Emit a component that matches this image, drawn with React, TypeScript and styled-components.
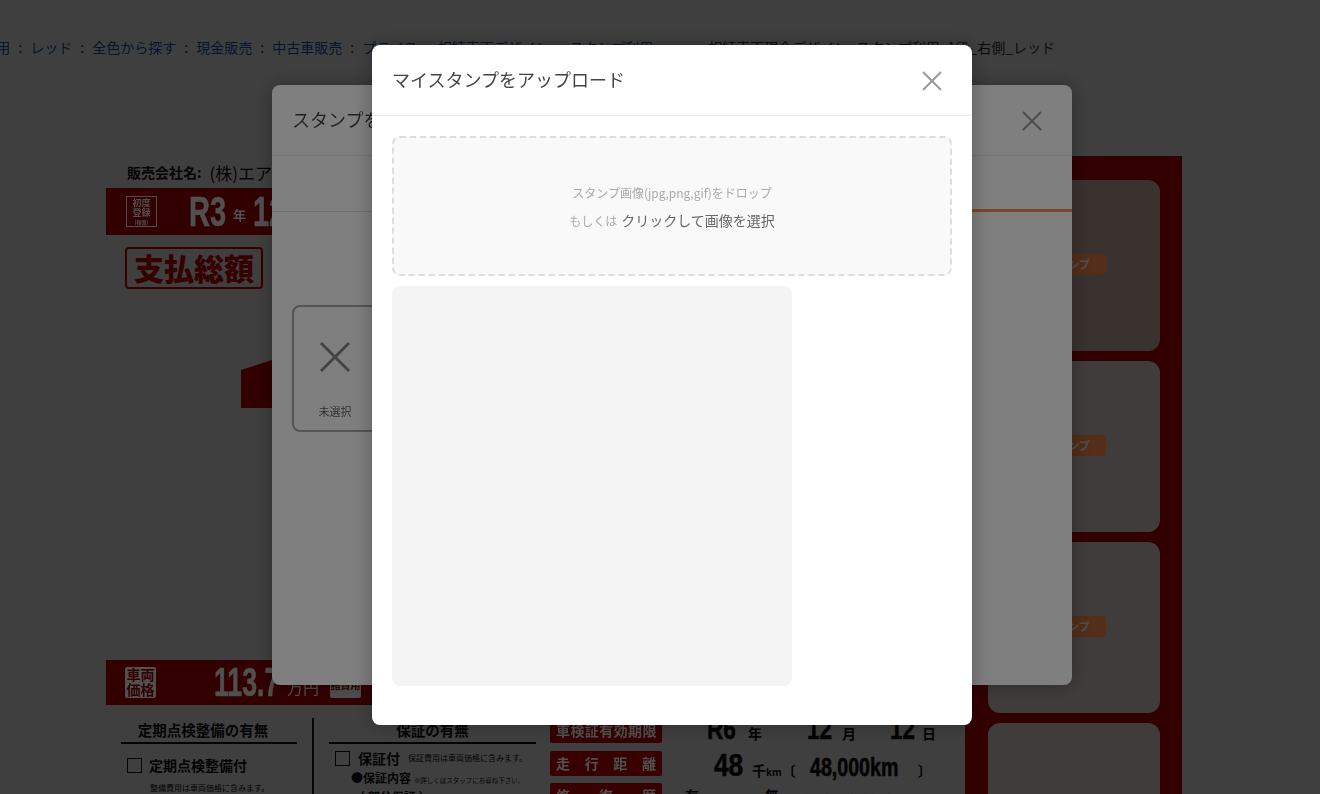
import React from "react";
import styled, { createGlobalStyle, css } from "styled-components";

const GlobalStyle = createGlobalStyle`
  html, body {
    margin: 0;
    padding: 0;
    background: #fff;
    overflow: hidden;
    height: 100%;
    font-family: "Noto Sans CJK JP", "Noto Sans", sans-serif;
  }
`;

// flyer parts that stay in front of the first dim layer
const raised = css`
  position: relative;
  z-index: 2;
`;

const Page = styled.div`
  width: 1320px;
  height: 794px;
  overflow: hidden;
`;

const Breadcrumb = styled.nav`
  height: 156px;
  box-sizing: border-box;
  padding: 37px 265px 0 0;
  display: flex;
  justify-content: flex-end;
  font-size: 14px;
  line-height: 20px;
  white-space: nowrap;
  color: #333;
`;

const Crumb = styled.a`
  color: #1a55b8;
`;

const Sep = styled.span<{ $wide?: boolean }>`
  width: ${(p) => (p.$wide ? 55 : 20)}px;
  flex: none;
  text-align: center;
`;

const Flyer = styled.div`
  margin-left: 106px;
  width: 1076px;
  display: flex;
`;

const Sheet = styled.div`
  width: 859px;
  flex: none;
`;

const Seller = styled.div`
  height: 32px;
  padding-left: 21px;
  display: flex;
  align-items: center;
  gap: 8px;
  font-size: 14px;
  font-weight: 700;
  color: #111;
`;

const SellerName = styled.span`
  font-size: 17px;
  font-weight: 400;
`;

const RedBand = styled.div<{ $height: number }>`
  height: ${(p) => p.$height}px;
  background: #cc0000;
  display: flex;
  align-items: center;
  color: #a0a0a0;
`;

const RegistBox = styled.div`
  ${raised}
  margin-left: 20px;
  width: 31px;
  height: 31px;
  box-sizing: border-box;
  border: 1px solid #a0a0a0;
  font-size: 9px;
  line-height: 10px;
  font-weight: 700;
  text-align: center;
  display: flex;
  flex-direction: column;
  justify-content: center;
`;

const TinyLine = styled.span`
  font-size: 5px;
  line-height: 7px;
`;

const Condensed = styled.span<{ $size: number; $width: number; $scale: number; $left?: number }>`
  display: inline-block;
  flex: none;
  margin-left: ${(p) => p.$left ?? 0}px;
  width: ${(p) => p.$width}px;
  font-family: "Liberation Sans", sans-serif;
  font-size: ${(p) => p.$size}px;
  line-height: ${(p) => p.$size}px;
  font-weight: 700;
  white-space: nowrap;
  -webkit-text-stroke: 0.6px currentColor;
  transform: scaleX(${(p) => p.$scale});
  transform-origin: left center;
`;

const BandFigure = styled(Condensed)`
  ${raised}
`;

const BandUnit = styled.span`
  ${raised}
  margin: 6px 7px 0 7px;
  font-size: 13px;
  font-weight: 700;
`;

const TotalTag = styled.div`
  margin: 12px 0 0 19px;
  width: 138px;
  height: 42px;
  box-sizing: border-box;
  border: 2px solid #d80000;
  border-radius: 4px;
  color: #d80000;
  font-size: 30px;
  line-height: 37px;
  font-weight: 900;
  text-align: center;
`;

const PriceArea = styled.div`
  height: 371px;
  padding: 71px 0 0 135px;
  box-sizing: border-box;
`;

const PriceMark = styled.svg`
  display: block;
`;

const PriceTagBox = styled.div`
  ${raised}
  margin-left: 19px;
  width: 31px;
  height: 31px;
  border-radius: 2px;
  background: #a0a0a0;
  color: #660000;
  font-size: 14px;
  line-height: 15px;
  font-weight: 700;
  text-align: center;
`;

const PriceUnit = styled.span`
  ${raised}
  font-size: 16px;
  margin: 8px 0 0 8px;
`;

const FeeBox = styled.div`
  ${raised}
  margin-left: 11px;
  width: 31px;
  height: 31px;
  border-radius: 2px;
  background: #a0a0a0;
  color: #660000;
  font-size: 10px;
  font-weight: 700;
  display: flex;
  align-items: center;
  justify-content: center;
  padding-top: 4px;
  box-sizing: border-box;
`;

const Details = styled.div`
  display: flex;
  padding: 13px 0 0 15px;
  color: #111;
`;

const Column = styled.div<{ $width: number }>`
  width: ${(p) => p.$width}px;
  flex: none;
`;

const ColumnTitle = styled.div<{ $shift?: number }>`
  height: 24px;
  padding-right: ${(p) => p.$shift ?? 0}px;
  border-bottom: 2px solid #111;
  font-size: 14.5px;
  line-height: 24px;
  font-weight: 700;
  text-align: center;
`;

const Divider = styled.div`
  width: 2px;
  height: 90px;
  margin: 0 15px;
  background: #111;
`;

const CheckRow = styled.div<{ $top: number; $gap: number }>`
  display: flex;
  align-items: center;
  gap: ${(p) => p.$gap}px;
  padding: ${(p) => p.$top}px 0 0 6px;
  font-size: 14px;
  line-height: 16px;
  font-weight: 700;
  white-space: nowrap;
`;

const CheckBox = styled.span`
  width: 13px;
  height: 13px;
  border: 1px solid #111;
  flex: none;
`;

const SmallNote = styled.span<{ $size?: number; $left?: number }>`
  margin-left: ${(p) => p.$left ?? 0}px;
  font-size: ${(p) => p.$size ?? 8}px;
  font-weight: 400;
`;

const Indented = styled.div<{ $left: number; $top: number }>`
  padding: ${(p) => p.$top}px 0 0 ${(p) => p.$left}px;
  font-size: 12px;
  font-weight: 700;
  line-height: 15px;
  white-space: nowrap;
`;

const SpecColumn = styled.div`
  margin-left: 14px;
  width: 400px;
`;

const SpecRow = styled.div<{ $height: number }>`
  height: ${(p) => p.$height}px;
  display: flex;
  align-items: flex-start;
`;

const SpecLabel = styled.div<{ $spread?: boolean }>`
  width: 112px;
  height: 25px;
  flex: none;
  box-sizing: border-box;
  padding: 0 6px;
  border-radius: 2px;
  background: #e00000;
  color: #a0a0a0;
  font-size: 14px;
  line-height: 25px;
  font-weight: 700;
  text-align: justify;
  text-align-last: justify;
  letter-spacing: ${(p) => (p.$spread ? 0 : "-0.5px")};
`;

const SpecLabelText = styled.div`
  ${raised}
`;

const SpecValue = styled.div<{ $offset: number }>`
  display: flex;
  align-items: baseline;
  margin-top: ${(p) => p.$offset}px;
  color: #111;
  white-space: nowrap;
`;

const SpecUnit = styled.span<{ $left: number }>`
  margin-left: ${(p) => p.$left}px;
  font-size: 14px;
  font-weight: 700;
`;

const KmUnit = styled.span`
  font-size: 10px;
`;

const StampColumn = styled.div`
  flex: 1;
  height: 640px;
  box-sizing: border-box;
  padding: 24px 22px 0 23px;
  background: #cc0000;
  display: flex;
  flex-direction: column;
  gap: 10px;
`;

const StampCard = styled.div<{ $tinted?: boolean }>`
  height: 171px;
  flex: none;
  border-radius: 12px;
  background: ${(p) => (p.$tinted ? "#ebcabd" : "#fff3ee")};
  display: flex;
  align-items: center;
  justify-content: center;
`;

const StampBadge = styled.div`
  ${raised}
  width: 76px;
  height: 21px;
  margin: -2px 12px 0 0;
  border-radius: 3px;
  background: #a85c30;
  color: #a0a0a0;
  font-size: 11px;
  line-height: 21px;
  font-weight: 700;
  text-align: center;
`;

const Overlay = styled.div<{ $layer: number }>`
  position: fixed;
  inset: 0;
  z-index: ${(p) => p.$layer};
  background: rgba(0, 0, 0, 0.5);
`;

const Modal = styled.section<{ $width: number; $top: number; $height: number; $layer: number }>`
  position: fixed;
  z-index: ${(p) => p.$layer};
  left: calc(50% + 12px - ${(p) => p.$width / 2}px);
  top: ${(p) => p.$top}px;
  width: ${(p) => p.$width}px;
  height: ${(p) => p.$height}px;
  border-radius: 8px;
  background: #fff;
  overflow: hidden;
  box-shadow: 0 0 20px rgba(0, 0, 0, 0.3);
`;

const ModalHead = styled.header`
  height: 71px;
  box-sizing: border-box;
  padding: 0 30px 2px 20px;
  border-bottom: 1px solid #e8e8e8;
  display: flex;
  align-items: center;
  justify-content: space-between;
`;

const ModalTitle = styled.h2`
  margin: 0;
  font-size: 18px;
  font-weight: 400;
  color: #444;
`;

const CloseIcon = styled.svg`
  display: block;
  width: 20px;
  height: 20px;
  margin-top: 3px;
  stroke: #999;
  stroke-width: 2;
  fill: none;
`;

const Tabs = styled.div`
  height: 56px;
  box-sizing: border-box;
  border-bottom: 1px solid #e0e0e0;
  display: flex;
`;

const Tab = styled.div<{ $active?: boolean }>`
  flex: 1;
  height: 56px;
  box-sizing: border-box;
  border-bottom: ${(p) => (p.$active ? "3px solid #ff8a50" : "none")};
  display: flex;
  align-items: center;
  justify-content: center;
  font-size: 14px;
  color: #333;
`;

const StampList = styled.div`
  padding: 93px 20px 0;
  display: flex;
  gap: 12px;
`;

const NoneCard = styled.div`
  width: 86px;
  height: 127px;
  box-sizing: border-box;
  border: 2px solid #aaa;
  border-radius: 8px;
  display: flex;
  flex-direction: column;
  align-items: center;
  padding-top: 34px;
`;

const NoneIcon = styled.svg`
  display: block;
  width: 32px;
  height: 32px;
  stroke: #888;
  stroke-width: 3;
  fill: none;
`;

const NoneLabel = styled.span`
  margin-top: 30px;
  font-size: 11px;
  color: #666;
`;

const UploadBody = styled.div`
  padding: 20px 20px 0;
  display: flex;
  flex-direction: column;
  gap: 10px;
`;

const DropZone = styled.div`
  height: 140px;
  box-sizing: border-box;
  padding-top: 2px;
  border: 2px dashed #ddd;
  border-radius: 8px;
  background: #f9f9f9;
  display: flex;
  flex-direction: column;
  align-items: center;
  justify-content: center;
  gap: 7px;
  color: #aaa;
  font-size: 12px;
  line-height: 20px;
`;

const DropLine = styled.div`
  display: flex;
  align-items: baseline;
  gap: 4px;
`;

const PickLink = styled.span`
  font-size: 14px;
  color: #666;
`;

const Preview = styled.div`
  width: 400px;
  height: 400px;
  border-radius: 8px;
  background: #f4f4f4;
`;

const Cross = () => (
  <CloseIcon viewBox="0 0 20 20">
    <path d="M1 1 L19 19 M19 1 L1 19" />
  </CloseIcon>
);

const crumbs = ["利用", "レッド", "全色から探す", "現金販売", "中古車販売", "プライス", "相続車両デザイン", "スタンプ利用"];

const App = () => (
  <Page>
    <GlobalStyle />
    <Breadcrumb>
      {crumbs.map((c, i) => (
        <React.Fragment key={c}>
          <Crumb>{c}</Crumb>
          <Sep $wide={i === crumbs.length - 1}>:</Sep>
        </React.Fragment>
      ))}
      <span>相続車両現金デザイン_スタンプ利用_1段_右側_レッド</span>
    </Breadcrumb>

    <Flyer>
      <Sheet>
        <Seller>
          販売会社名:<SellerName>(株)エアー</SellerName>
        </Seller>
        <RedBand $height={47}>
          <RegistBox>
            <span>初度</span>
            <span>登録</span>
            <TinyLine>(検査)</TinyLine>
          </RegistBox>
          <BandFigure $size={42} $width={37} $scale={0.69} $left={32}>R3</BandFigure>
          <BandUnit>年</BandUnit>
          <BandFigure $size={42} $width={37} $scale={0.69}>12</BandFigure>
        </RedBand>
        <TotalTag>支払総額</TotalTag>
        <PriceArea>
          <PriceMark width="40" height="48" viewBox="0 0 40 48">
            <path d="M0 10 L31 0 H40 V48 H0 Z" fill="#cc0000" />
          </PriceMark>
        </PriceArea>
        <RedBand $height={45}>
          <PriceTagBox>車両価格</PriceTagBox>
          <BandFigure $size={41} $width={65} $scale={0.65} $left={58}>113.7</BandFigure>
          <PriceUnit>万円</PriceUnit>
          <FeeBox>諸費用</FeeBox>
        </RedBand>
        <Details>
          <Column $width={176}>
            <ColumnTitle $shift={12}>定期点検整備の有無</ColumnTitle>
            <CheckRow $top={13} $gap={7}>
              <CheckBox />
              定期点検整備付
            </CheckRow>
            <Indented $left={29} $top={5}>
              <SmallNote>整備費用は車両価格に含みます。</SmallNote>
            </Indented>
          </Column>
          <Divider />
          <Column $width={207}>
            <ColumnTitle>保証の有無</ColumnTitle>
            <CheckRow $top={6} $gap={8}>
              <CheckBox />
              保証付 <SmallNote>保証費用は車両価格に含みます。</SmallNote>
            </CheckRow>
            <Indented $left={22} $top={4}>
              ●保証内容 <SmallNote $size={6.5}>※詳しくはスタッフにお尋ね下さい。</SmallNote>
            </Indented>
            <Indented $left={24} $top={1}>〈 部分保証 〉</Indented>
          </Column>
          <SpecColumn>
            <SpecRow $height={33}>
              <SpecLabel><SpecLabelText>車検証有効期限</SpecLabelText></SpecLabel>
              <SpecValue $offset={-4}>
                <Condensed $size={30} $width={28} $scale={0.75} $left={45}>R6</Condensed>
                <SpecUnit $left={13}>年</SpecUnit>
                <Condensed $size={30} $width={21} $scale={0.75} $left={45}>12</Condensed>
                <SpecUnit $left={14}>月</SpecUnit>
                <Condensed $size={30} $width={21} $scale={0.75} $left={34}>12</Condensed>
                <SpecUnit $left={11}>日</SpecUnit>
              </SpecValue>
            </SpecRow>
            <SpecRow $height={32}>
              <SpecLabel $spread><SpecLabelText>走行距離</SpecLabelText></SpecLabel>
              <SpecValue $offset={-2}>
                <Condensed $size={32} $width={29} $scale={0.82} $left={52}>48</Condensed>
                <SpecUnit $left={9}>千<KmUnit>km</KmUnit></SpecUnit>
                <SpecUnit $left={0}>〔</SpecUnit>
                <Condensed $size={25} $width={88} $scale={0.785} $left={14}>48,000km</Condensed>
                <SpecUnit $left={20}>〕</SpecUnit>
              </SpecValue>
            </SpecRow>
            <SpecRow $height={32}>
              <SpecLabel $spread><SpecLabelText>修復歴</SpecLabelText></SpecLabel>
              <SpecValue $offset={2}>
                <SpecUnit $left={23}>有</SpecUnit>
                <SpecUnit $left={66}>無</SpecUnit>
                <SmallNote $size={7.5} $left={24}>有りの場合、車両状態を表示した書面にて、</SmallNote>
              </SpecValue>
            </SpecRow>
          </SpecColumn>
        </Details>
      </Sheet>
      <StampColumn>
        {[0, 1, 2, 3].map((i) => (
          <StampCard key={i} $tinted={i === 0}>{i < 3 && <StampBadge>スタンプ</StampBadge>}</StampCard>
        ))}
      </StampColumn>
    </Flyer>

    <Overlay $layer={1} />
    <Modal $width={800} $top={85} $height={600} $layer={3}>
      <ModalHead>
        <ModalTitle>スタンプを選択</ModalTitle>
        <Cross />
      </ModalHead>
      <Tabs>
        <Tab>スタンプ</Tab>
        <Tab $active>マイスタンプ</Tab>
      </Tabs>
      <StampList>
        <NoneCard>
          <NoneIcon viewBox="0 0 32 32">
            <path d="M2 2 L30 30 M30 2 L2 30" />
          </NoneIcon>
          <NoneLabel>未選択</NoneLabel>
        </NoneCard>
      </StampList>
    </Modal>

    <Overlay $layer={4} />
    <Modal $width={600} $top={45} $height={680} $layer={5}>
      <ModalHead>
        <ModalTitle>マイスタンプをアップロード</ModalTitle>
        <Cross />
      </ModalHead>
      <UploadBody>
        <DropZone>
          <div>スタンプ画像(jpg,png,gif)をドロップ</div>
          <DropLine>
            もしくは <PickLink>クリックして画像を選択</PickLink>
          </DropLine>
        </DropZone>
        <Preview />
      </UploadBody>
    </Modal>
  </Page>
);

export default App;
